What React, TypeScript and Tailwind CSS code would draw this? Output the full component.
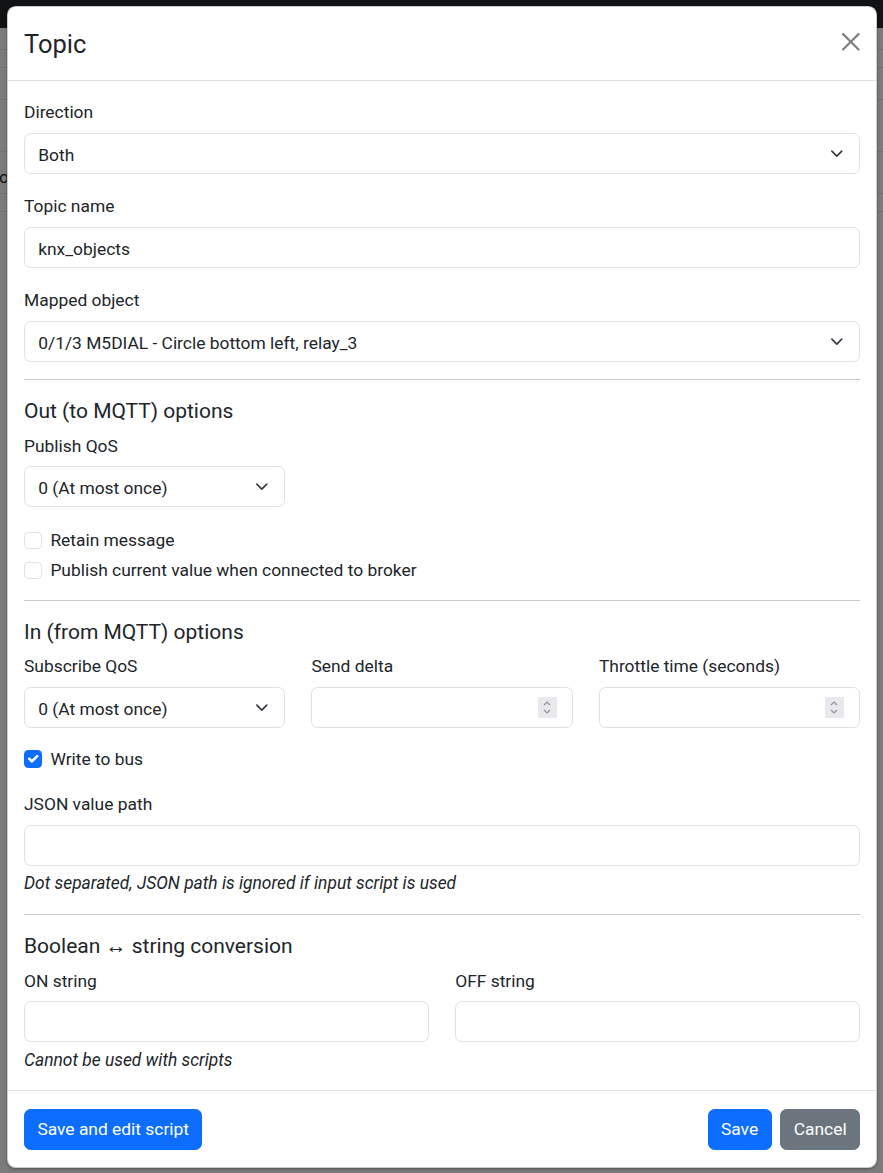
import { ReactNode } from 'react';

function Chevron() {
  return (
    <svg viewBox="0 0 16 16" className="h-[13.2px] w-[17.6px] shrink-0" fill="none">
      <path d="m2 5 6 6 6-6" stroke="#343a40" strokeWidth="2" strokeLinecap="round" strokeLinejoin="round" />
    </svg>
  );
}

function Label({ children }: { children: ReactNode }) {
  return <label className="mb-[7.3px] block pt-[1.5px] text-[17.4px] leading-[26.4px]">{children}</label>;
}

function Select({ value, className = '' }: { value: string; className?: string }) {
  return (
    <div
      className={`flex h-[41px] items-center justify-between rounded-[6.6px] border border-[#dee2e6] bg-white px-[13.2px] text-[17.4px] leading-[26.4px] ${className}`}
    >
      <span className="pt-[3px]">{value}</span>
      <Chevron />
    </div>
  );
}

function Input({ value = '' }: { value?: string }) {
  return (
    <input
      readOnly
      value={value}
      className="block h-[41px] w-full rounded-[6.6px] border border-[#dee2e6] bg-white px-[13.2px] pt-[3px] text-[17.4px] leading-[26.4px] text-[#212529] outline-none"
    />
  );
}

function NumberInput() {
  return (
    <div className="flex h-[41px] items-center rounded-[6.6px] border border-[#dee2e6] bg-white pl-[13.2px] pr-[15px]">
      <input readOnly className="min-w-0 flex-1 text-[17.4px] outline-none" />
      <div className="flex h-[21px] w-[19px] flex-col items-center justify-center gap-[3px] bg-[#e9e9ed]">
        <svg viewBox="0 0 8 5" className="h-[5px] w-[8px]" fill="none">
          <path d="m1 4 3-3 3 3" stroke="#8f8f9d" strokeWidth="1.2" />
        </svg>
        <svg viewBox="0 0 8 5" className="h-[5px] w-[8px]" fill="none">
          <path d="m1 1 3 3 3-3" stroke="#8f8f9d" strokeWidth="1.2" />
        </svg>
      </div>
    </div>
  );
}

function Check({ label, checked = false }: { label: string; checked?: boolean }) {
  return (
    <div className="flex min-h-[26.4px] items-start gap-[8.8px] text-[17.4px] leading-[26.4px]">
      {checked ? (
        <span className="mt-[4.4px] flex h-[17.6px] w-[17.6px] shrink-0 items-center justify-center rounded-[4.4px] bg-[#0d6efd]">
          <svg viewBox="0 0 20 20" className="h-[17.6px] w-[17.6px]" fill="none">
            <path d="m6 10 3 3 6-6" stroke="#fff" strokeWidth="3" strokeLinecap="round" strokeLinejoin="round" />
          </svg>
        </span>
      ) : (
        <span className="mt-[4.4px] h-[17.6px] w-[17.6px] shrink-0 rounded-[4.4px] border border-[#dee2e6] bg-white" />
      )}
      <span className="pt-[1px] leading-[25.4px]">{label}</span>
    </div>
  );
}

function Heading({ children }: { children: ReactNode }) {
  return <h5 className="mb-[7.8px] pt-[1px] text-[21px] leading-[24.4px] font-normal">{children}</h5>;
}

function Rule() {
  return <hr className="my-[17.6px] border-0 border-t border-[#c8c9ca]" />;
}

function Hint({ children }: { children: ReactNode }) {
  return <div className="mt-[4.4px] pt-[1px] text-[17.4px] leading-[25.4px] italic">{children}</div>;
}

function Button({ children, tone = 'primary' }: { children: ReactNode; tone?: 'primary' | 'secondary' }) {
  const color =
    tone === 'primary' ? 'bg-[#0d6efd] border-[#0d6efd]' : 'bg-[#6c757d] border-[#6c757d]';
  return (
    <button
      className={`m-[4.4px] h-[41px] rounded-[6.6px] border px-[12.4px] text-[17.4px] leading-[26.4px] text-white ${color}`}
    >
      {children}
    </button>
  );
}

function Backdrop() {
  return (
    <div className="flex flex-col">
      <div className="h-[28px] bg-[#111213]" />
      <div className="h-[22px] border-b border-[#6f6f6f]" />
      <div className="h-[18px] border-b border-[#6f6f6f]" />
      <div className="h-[32px] border-b border-[#6f6f6f]" />
      <div className="h-[52px] border-b border-[#6f6f6f]" />
      <div className="relative h-[42px] border-b border-[#6f6f6f]">
        <span className="absolute top-[12px] left-[-1px] text-[17.4px] text-[#111]">op</span>
      </div>
      <div className="h-[18px] border-b border-[#6f6f6f]" />
    </div>
  );
}

export default function App() {
  return (
    <div className="relative h-[1173px] overflow-hidden bg-[#7b7b7b] font-[Roboto,sans-serif] text-[#212529]">
      <Backdrop />

      <div className="absolute top-[6px] left-[7px] w-[870px] rounded-[8.8px] border border-black/20 bg-white shadow-[0_1px_3px_rgba(0,0,0,0.35)]">
        <div className="flex items-center justify-between border-b border-[#dee2e6] px-[16px] py-[16.7px]">
          <h1 className="pt-[1px] text-[25.5px] leading-[38.6px] font-normal">Topic</h1>
          <button className="mt-[-3px] flex h-[17.6px] w-[17.6px] items-center justify-center opacity-50" aria-label="Close">
            <svg viewBox="0 0 16 16" className="h-[17.6px] w-[17.6px]">
              <path
                d="M.293.293a1 1 0 0 1 1.414 0L8 6.586 14.293.293a1 1 0 1 1 1.414 1.414L9.414 8l6.293 6.293a1 1 0 0 1-1.414 1.414L8 9.414l-6.293 6.293a1 1 0 0 1-1.414-1.414L6.586 8 .293 1.707a1 1 0 0 1 0-1.414z"
                fill="#000"
              />
            </svg>
          </button>
        </div>

        <div className="px-[16px] pt-[17px] pb-[17px]">
          <div className="mb-[17.6px]">
            <Label>Direction</Label>
            <Select value="Both" />
          </div>
          <div className="mb-[17.6px]">
            <Label>Topic name</Label>
            <Input value="knx_objects" />
          </div>
          <div>
            <Label>Mapped object</Label>
            <Select value="0/1/3 M5DIAL - Circle bottom left, relay_3" />
          </div>

          <Rule />
          <Heading>Out (to MQTT) options</Heading>
          <Label>Publish QoS</Label>
          <Select value="0 (At most once)" className="w-[261px]" />
          <div className="mt-[20px] mb-[-1px] flex flex-col gap-[3.4px]">
            <Check label="Retain message" />
            <Check label="Publish current value when connected to broker" />
          </div>

          <Rule />
          <Heading>In (from MQTT) options</Heading>
          <div className="grid grid-cols-3 gap-x-[26.4px]">
            <div>
              <Label>Subscribe QoS</Label>
              <Select value="0 (At most once)" />
            </div>
            <div>
              <Label>Send delta</Label>
              <NumberInput />
            </div>
            <div>
              <Label>Throttle time (seconds)</Label>
              <NumberInput />
            </div>
          </div>
          <div className="mt-[17.6px]">
            <Check label="Write to bus" checked />
          </div>
          <div className="mt-[17.6px]">
            <Label>JSON value path</Label>
            <Input />
            <Hint>Dot separated, JSON path is ignored if input script is used</Hint>
          </div>

          <Rule />
          <Heading>Boolean ↔ string conversion</Heading>
          <div className="grid grid-cols-2 gap-x-[26.4px]">
            <div>
              <Label>ON string</Label>
              <Input />
            </div>
            <div>
              <Label>OFF string</Label>
              <Input />
            </div>
          </div>
          <Hint>Cannot be used with scripts</Hint>
        </div>

        <div className="flex items-center justify-between border-t border-[#dee2e6] px-[11.6px] py-[13.2px]">
          <Button>Save and edit script</Button>
          <div className="flex">
            <Button>Save</Button>
            <Button tone="secondary">Cancel</Button>
          </div>
        </div>
      </div>
    </div>
  );
}
